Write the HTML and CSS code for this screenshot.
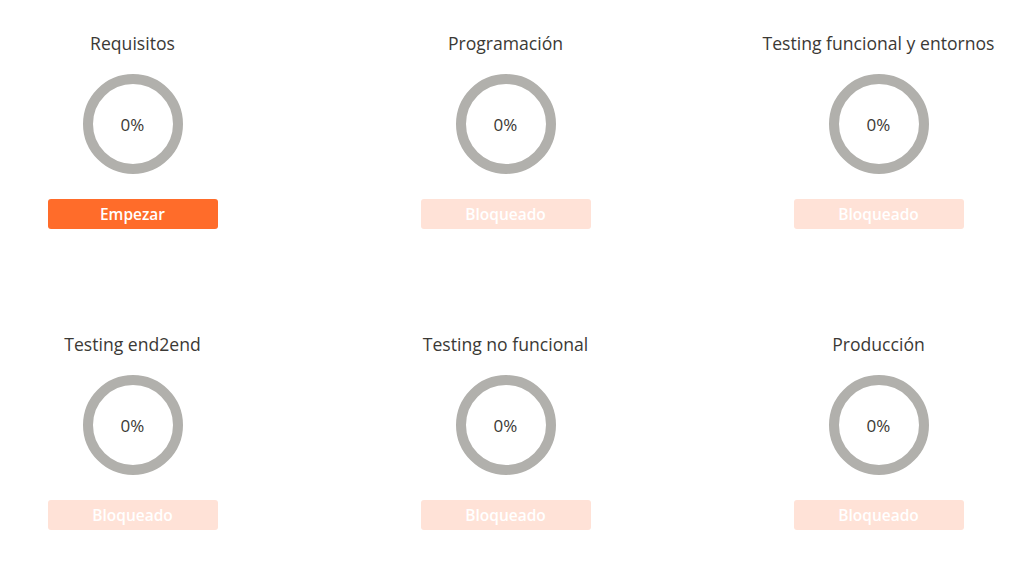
FILE: index.html
```html
<!DOCTYPE html>
<html lang="es">
<head>
    <meta charset="UTF-8">
    <meta name="viewport" content="width=device-width, initial-scale=1.0">
    <title>Fases</title>
    <link rel="stylesheet" href="styles.css">
</head>
<body>
    <div class="phases">
        <div class="phase">
            <h2>Requisitos</h2>
            <div class="ring"><span>0%</span></div>
            <button class="start">Empezar</button>
        </div>
        <div class="phase">
            <h2>Programación</h2>
            <div class="ring"><span>0%</span></div>
            <button class="locked" disabled>Bloqueado</button>
        </div>
        <div class="phase">
            <h2>Testing funcional y entornos</h2>
            <div class="ring"><span>0%</span></div>
            <button class="locked" disabled>Bloqueado</button>
        </div>
        <div class="phase">
            <h2>Testing end2end</h2>
            <div class="ring"><span>0%</span></div>
            <button class="locked" disabled>Bloqueado</button>
        </div>
        <div class="phase">
            <h2>Testing no funcional</h2>
            <div class="ring"><span>0%</span></div>
            <button class="locked" disabled>Bloqueado</button>
        </div>
        <div class="phase">
            <h2>Producción</h2>
            <div class="ring"><span>0%</span></div>
            <button class="locked" disabled>Bloqueado</button>
        </div>
    </div>
</body>
</html>
```
FILE: styles.css
```css
body {
    font-family: "Open Sans", "Noto Sans", sans-serif;
    background-color: #fff;
    color: #3b3935;
    margin: 0;
    padding: 0;
}
.phases {
    display: grid;
    grid-template-columns: repeat(3, 265px);
    column-gap: 108px;
    row-gap: 103px;
    padding-top: 31px;
}
.phase {
    display: flex;
    flex-direction: column;
    align-items: center;
}
.phase h2 {
    margin: 0;
    font-size: 17.6px;
    font-weight: 400;
    line-height: 24px;
    white-space: nowrap;
}
.ring {
    box-sizing: border-box;
    width: 100px;
    height: 100px;
    margin-top: 19px;
    border: 10px solid #b1b0ac;
    border-radius: 50%;
    display: flex;
    justify-content: center;
    align-items: center;
    font-size: 17px;
}
.phase button {
    width: 170px;
    height: 30px;
    margin-top: 25px;
    border: none;
    border-radius: 3px;
    font-family: inherit;
    font-size: 15.5px;
    font-weight: 600;
    color: #fff;
    padding: 0;
}
.start {
    background-color: #ff6c2a;
    cursor: pointer;
}
.locked {
    background-color: #ffe2d7;
}
```
